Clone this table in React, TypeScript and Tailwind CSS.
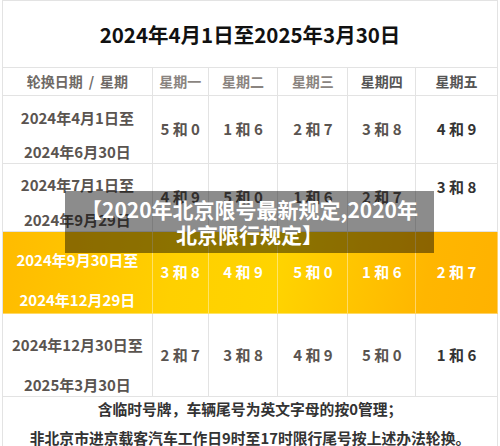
import React from "react";

const font = { fontFamily: '"Noto Sans CJK SC", "Noto Sans", sans-serif' };

type Row = {
  d1: string;
  d2: string;
  vals: string[];
  h: string;
  lh: string;
  pt: string;
  hl?: boolean;
};

const rows: Row[] = [
  { d1: "2024年4月1日至", d2: "2024年6月30日", vals: ["5 和 0", "1 和 6", "2 和 7", "3 和 8", "4 和 9"], h: "h-[68px]", lh: "leading-[34px]", pt: "pt-[10px]" },
  { d1: "2024年7月1日至", d2: "2024年9月29日", vals: ["4 和 9", "5 和 0", "1 和 6", "2 和 7", "3 和 8"], h: "h-[68px]", lh: "leading-[35px]", pt: "pt-[8px]" },
  { d1: "2024年9月30日至", d2: "2024年12月29日", vals: ["3 和 8", "4 和 9", "5 和 0", "1 和 6", "2 和 7"], h: "h-[82px]", lh: "leading-[40px]", pt: "pt-[14px]", hl: true },
  { d1: "2024年12月30日至", d2: "2025年3月30日", vals: ["2 和 7", "3 和 8", "4 和 9", "5 和 0", "1 和 6"], h: "h-[83px]", lh: "leading-[40px]", pt: "pt-[20px]" },
];

const headers = ["星期一", "星期二", "星期三", "星期四", "星期五"];
const colW = ["w-[56px]", "w-[70px]", "w-[70px]", "w-[68px]", "w-[82px]"];

export default function App() {
  return (
    <div className="relative w-[500px] h-[446px] overflow-hidden bg-white pl-[2px]" style={font}>
      <div className="w-[496px] border-l border-t border-[#e3e3e3]">
        <div className="h-[67px] flex items-center justify-center border-b border-r border-[#e3e3e3] text-[20.5px] font-bold text-[#111]">
          2024年4月1日至2025年3月30日
        </div>
        <div className="flex h-[28px] text-[14px] font-bold">
          <div className="w-[150px] flex items-center justify-center border-b border-r border-[#e3e3e3] text-[#6f6a66]">
            <span>轮换日期</span>
            <span className="mx-[6px]">/</span>
            <span>星期</span>
          </div>
          {headers.map((h, i) => (
            <div
              key={h}
              className={`${colW[i]} flex items-center justify-center border-b border-r border-[#e3e3e3] ${i < 3 ? "text-[#8a8480]" : "text-[#555]"}`}
            >
              {h}
            </div>
          ))}
        </div>
        {rows.map((r, ri) => (
          <div
            key={ri}
            className={`flex ${r.h} text-[15px] font-bold ${r.hl ? "bg-[linear-gradient(100deg,#ffbb00_0%,#ffd000_35%,#ffd400_55%,#ffb600_85%,#ffb200_100%)] text-white" : "text-[#5a5450]"}`}
          >
            <div
              className={`w-[150px] flex flex-col items-center justify-center border-b border-r ${r.hl ? "border-white/40" : "border-[#e3e3e3]"} ${r.lh} ${r.pt}`}
            >
              <div>{r.d1}</div>
              <div>{r.d2}</div>
            </div>
            {r.vals.map((v, i) => (
              <div
                key={i}
                className={`${colW[i]} flex items-center justify-center border-b border-r ${r.hl ? "border-white/40" : "border-[#e3e3e3]"} ${i === 4 && !r.hl ? "text-[#333]" : ""}`}
              >
                <span className={ri === 1 && i === 4 ? "mb-[20px]" : ""}>{v}</span>
              </div>
            ))}
          </div>
        ))}
        <div className="h-[60px] border-r border-[#e3e3e3] text-center text-[14.8px] font-bold text-[#333] leading-[29px] -mt-[3px]">
          <div>含临时号牌，车辆尾号为英文字母的按0管理；</div>
          <div>非北京市进京载客汽车工作日9时至17时限行尾号按上述办法轮换。</div>
        </div>
      </div>
      <div className="absolute left-[65px] top-[191px] w-[369px] h-[62px] bg-black/45 flex flex-col items-center justify-center text-white font-bold text-[21px] leading-[25px] text-center">
        <div>【2020年北京限号最新规定,2020年</div>
        <div>北京限行规定】</div>
      </div>
    </div>
  );
}
